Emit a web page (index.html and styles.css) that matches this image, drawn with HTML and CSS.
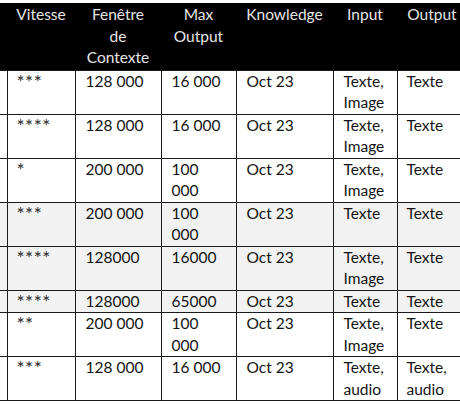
FILE: index.html
```html
<!DOCTYPE html>
<html lang="fr">
<head>
<meta charset="utf-8">
<title>Modèles</title>
<link rel="stylesheet" href="styles.css">
</head>
<body>
<div class="frame">
<table class="models">
  <colgroup>
    <col class="c0"><col class="c1"><col class="c2"><col class="c3"><col class="c4"><col class="c5"><col class="c6">
  </colgroup>
  <thead>
    <tr>
      <th></th>
      <th>Vitesse</th>
      <th>Fenêtre<br>de<br>Contexte</th>
      <th>Max<br>Output</th>
      <th>Knowledge</th>
      <th>Input</th>
      <th>Output</th>
    </tr>
  </thead>
  <tbody>
    <tr>
      <td></td><td class="stars">***</td><td>128 000</td><td>16 000</td><td>Oct 23</td><td>Texte,<br>Image</td><td>Texte</td>
    </tr>
    <tr>
      <td></td><td class="stars">****</td><td>128 000</td><td>16 000</td><td>Oct 23</td><td>Texte,<br>Image</td><td>Texte</td>
    </tr>
    <tr>
      <td></td><td class="stars">*</td><td>200 000</td><td>100<br>000</td><td>Oct 23</td><td>Texte,<br>Image</td><td>Texte</td>
    </tr>
    <tr class="shade">
      <td></td><td class="stars">***</td><td>200 000</td><td>100<br>000</td><td>Oct 23</td><td>Texte</td><td>Texte</td>
    </tr>
    <tr class="shade">
      <td></td><td class="stars">****</td><td>128000</td><td>16000</td><td>Oct 23</td><td>Texte,<br>Image</td><td>Texte</td>
    </tr>
    <tr class="shade">
      <td></td><td class="stars">****</td><td>128000</td><td>65000</td><td>Oct 23</td><td>Texte</td><td>Texte</td>
    </tr>
    <tr>
      <td></td><td class="stars">**</td><td>200 000</td><td>100<br>000</td><td>Oct 23</td><td>Texte,<br>Image</td><td>Texte</td>
    </tr>
    <tr>
      <td></td><td class="stars">***</td><td>128 000</td><td>16 000</td><td>Oct 23</td><td>Texte,<br>audio</td><td>Texte,<br>audio</td>
    </tr>
  </tbody>
</table>
</div>
</body>
</html>
```

FILE: styles.css
```css
html, body {
  margin: 0;
  padding: 0;
  background: #ffffff;
}

.frame {
  width: 460px;
  height: 405px;
  overflow: hidden;
  padding-top: 3px;
  box-sizing: border-box;
}

.models {
  border-collapse: collapse;
  table-layout: fixed;
  width: 467px;
  font-family: Lato, "Liberation Sans", sans-serif;
  font-size: 15.5px;
  line-height: 21.5px;
  color: #141414;
}

.c0 { width: 7px; }
.c1 { width: 68px; }
.c2 { width: 86px; }
.c3 { width: 75px; }
.c4 { width: 97px; }
.c5 { width: 64px; }
.c6 { width: 70px; }

.models th {
  background: #000000;
  color: #e6e6e6;
  font-weight: normal;
  text-align: center;
  vertical-align: top;
  padding: 1px 2px 1px;
  white-space: nowrap;
}

.models td {
  border: 1px solid #1a1a1a;
  padding: 0 4px 0 10px;
  vertical-align: top;
  white-space: nowrap;
  text-align: left;
}

.models td:first-child {
  border-left: none;
  padding: 0;
}

.models td:last-child {
  border-right: none;
  padding-left: 9px;
}

.models tbody tr:last-child td {
  border-bottom: 1.5px solid #1a1a1a;
}

.shade td {
  background: #f2f2f2;
}

.models td.stars {
  font-size: 19px;
  letter-spacing: 0.5px;
  padding-left: 9px;
  color: #2a2a2a;
}
```
